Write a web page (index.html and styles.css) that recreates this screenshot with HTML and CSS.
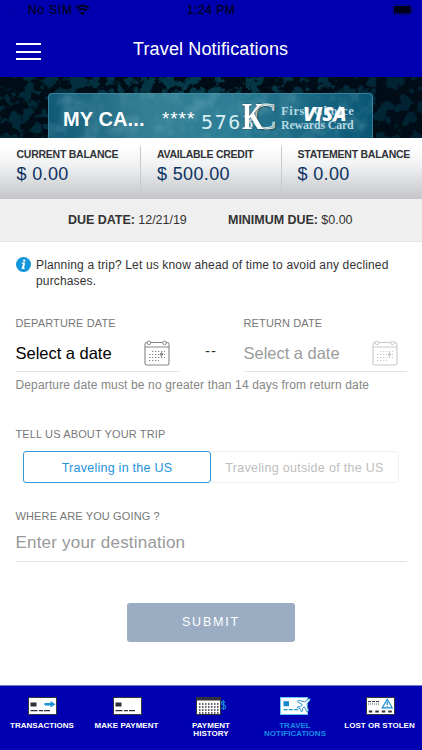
FILE: index.html
```html
<!DOCTYPE html>
<html lang="en">
<head>
<meta charset="utf-8">
<title>Travel Notifications</title>
<link rel="stylesheet" href="styles.css">
</head>
<body>
<div class="app">
  <header class="header">
    <div class="status">
      <div class="carrier"><span class="dots">....</span><span class="sim">No SIM</span>
        <svg width="15" height="12" viewBox="0 0 15 12"><path d="M1 4.2a9.5 9.5 0 0 1 13 0M3.2 6.8a6.2 6.2 0 0 1 8.6 0" fill="none" stroke="#020228" stroke-width="2.1"/><path d="M7.5 11.6 4.9 9a3.7 3.7 0 0 1 5.2 0z" fill="#020228"/></svg>
      </div>
      <span class="clock">1:24 PM</span>
      <svg class="battery" width="23" height="12" viewBox="0 0 23 12"><rect x=".5" y=".5" width="19" height="10.5" rx="2.5" fill="none" stroke="#06067c"/><rect x="2" y="2" width="16.5" height="7.5" rx="1" fill="#000018"/><path d="M21.2 4v4" stroke="#06067c" stroke-width="1.4"/></svg>
    </div>
    <div class="nav">
      <div class="menu"><i></i><i></i><i></i></div>
      <h1>Travel Notifications</h1>
    </div>
  </header>

  <section class="hero">
    <svg class="texture" width="422" height="61">
      <defs>
        <filter id="grunge" x="0" y="0" width="100%" height="100%" color-interpolation-filters="sRGB"><feTurbulence type="fractalNoise" baseFrequency=".085" numOctaves="4" seed="8"/><feColorMatrix values="0 0 0 0 0  0 0 0 0 .05  0 0 0 0 .09  12 0 0 0 -5.1"/></filter>
        <filter id="cloud" x="0" y="0" width="100%" height="100%"><feTurbulence type="fractalNoise" baseFrequency=".05" numOctaves="5" seed="3"/><feColorMatrix values="0 0 0 0 .25  0 0 0 0 .5  0 0 0 0 .58  2 0 0 0 -.85"/></filter>
        <linearGradient id="back"><stop offset="0" stop-color="#002736"/><stop offset=".5" stop-color="#063c4c"/><stop offset="1" stop-color="#002030"/></linearGradient>
        <linearGradient id="card"><stop offset="0" stop-color="#105a78"/><stop offset=".3" stop-color="#347f93"/><stop offset=".55" stop-color="#2d7e96"/><stop offset="1" stop-color="#085574"/></linearGradient>
        <clipPath id="cardshape"><path d="M48 61V20q0-4 4-4h317q4 0 4 4v41z"/></clipPath>
      </defs>
      <rect width="422" height="61" fill="url(#back)"/>
      <rect width="422" height="61" filter="url(#grunge)"/>
      <g clip-path="url(#cardshape)"><rect x="48" y="16" width="325" height="45" fill="url(#card)"/><rect x="48" y="16" width="325" height="45" filter="url(#cloud)" opacity=".35"/></g>
      <path d="M48.5 61V20q0-3.5 3.5-3.5h317q3.5 0 3.5 3.5v41" fill="none" stroke="#4c91a7" stroke-opacity=".7"/>
    </svg>
    <span class="cardname">MY CA...</span>
    <span class="stars">****</span>
    <span class="digits">5763</span>
    <span class="mono-c">C</span><span class="mono-k">K</span>
    <span class="brand">First Choice</span><span class="brand rewards">Rewards Card</span>
    <span class="visa">VISA</span>
  </section>

  <section class="stats">
    <div><b>CURRENT BALANCE</b><strong>$ 0.00</strong></div>
    <div><b>AVAILABLE CREDIT</b><strong>$ 500.00</strong></div>
    <div><b>STATEMENT BALANCE</b><strong>$ 0.00</strong></div>
  </section>
  <section class="due"><span><b>DUE DATE:</b> 12/21/19</span><span><b>MINIMUM DUE:</b> $0.00</span></section>

  <main class="form">
    <div class="tip">
      <svg width="15" height="15" viewBox="0 0 15 15"><circle cx="7.5" cy="7.5" r="7.5" fill="#1296dc"/><circle cx="8.2" cy="3.6" r="1.2" fill="#fff"/><path d="M5.8 6.2h2.3L7.1 11.2M5.7 11.3h3" fill="none" stroke="#fff" stroke-width="1.3"/><path d="m8 6-1 5.2" stroke="#fff" stroke-width="1.8"/></svg>
      <p>Planning a trip? Let us know ahead of time to avoid any declined<br>purchases.</p>
    </div>
    <div class="dates">
      <div class="field">
        <label>DEPARTURE DATE</label>
        <div class="input"><span>Select a date</span><svg width="26" height="26" viewBox="0 0 26 26"><g id="cal" fill="none" stroke="currentColor"><rect x="1" y="2.5" width="24" height="22.5" rx="1.8" stroke-width="1.1"/><path d="M1 7h24"/><circle cx="5" cy="2.8" r="1.8" fill="#fff"/><circle cx="20.5" cy="2.8" r="1.8" fill="#fff"/><path d="M8 11.5h13M5 14.5h16M5 17.5h16M5 20.5h10" stroke-dasharray="1.3 1.7"/><circle cx="17.5" cy="14.3" r="1.2" fill="currentColor"/><path d="M17.5 11.5v5.5" stroke-width=".8"/></g></svg></div>
      </div>
      <span class="dash">--</span>
      <div class="field off">
        <label>RETURN DATE</label>
        <div class="input"><span>Select a date</span><svg width="26" height="26" viewBox="0 0 26 26"><use href="#cal"/></svg></div>
      </div>
    </div>
    <p class="hint">Departure date must be no greater than 14 days from return date</p>
    <label class="trip">TELL US ABOUT YOUR TRIP</label>
    <div class="toggle"><span class="on">Traveling in the US</span><span class="no">Traveling outside of the US</span></div>
    <label class="where">WHERE ARE YOU GOING ?</label>
    <div class="destination">Enter your destination</div>
    <div class="submit">SUBMIT</div>
  </main>

  <nav class="tabs">
    <div class="tab"><svg width="34" height="19" viewBox="0 0 34 19"><rect x="3.5" y=".5" width="28" height="17" fill="#fff" stroke="#34343c"/><path d="M5.5 5.5h6v4h-6z" fill="#303039"/><path d="M19.5 6h6V4l5 3.2-5 3.2v-2h-6z" fill="#1c93d6"/><path d="M5.5 13.7H25" stroke="#303039" stroke-width="1.3" stroke-dasharray="7 1.5 4 1"/></svg>TRANSACTIONS</div>
    <div class="tab"><svg width="34" height="19" viewBox="0 0 34 19"><rect x="3.5" y=".5" width="28" height="17" fill="#fff" stroke="#34343c"/><path d="M5.5 5.5h6v4h-6z" fill="#303039"/><path d="M5.5 13.7H25" stroke="#303039" stroke-width="1.3" stroke-dasharray="7 1.5 4 1"/></svg>MAKE PAYMENT</div>
    <div class="tab"><svg width="34" height="19" viewBox="0 0 34 19"><rect x="2.5" y=".5" width="24" height="17" fill="#fff" stroke="#34343c"/><path d="M2 .5h25v3H2z" fill="#303039"/><path d="M5 7h20M5 10h20M5 13h20M5 16h20" stroke="#303039" stroke-width="1.3" stroke-dasharray="1.5 1.5"/><path d="M31.3 5.5q-4-2-4 .5 0 1.3 2 1.7 2.3.5 2.3 2.2 0 2.7-4.5 1.1M29.5 3v10" fill="none" stroke="#168bd3" stroke-width="1.2"/></svg>PAYMENT<br>HISTORY</div>
    <div class="tab active"><svg width="34" height="19" viewBox="0 0 34 19"><rect x="2.5" y=".5" width="27" height="17" fill="#fff" stroke="#68c4f2"/><path d="M5.5 4.2H11v5H5.5z" fill="#1687c8"/><path d="M5.5 12.7H21" stroke="#2394d0" stroke-width="1.3" stroke-dasharray="4 1.3"/><path d="m31 1.5-4.2 3.3-6.5-1.5-1 1.2 5 3.2-2 2.2-2.2-.4-.9.9 3 1.5 1.3 3 1-.8-.2-2.4 2-2 2.7 5.3 1.4-1L29 7l3-3.8q.8-1.7-1-1.7z" fill="#fff" stroke="#168bc9" stroke-width=".9"/></svg>TRAVEL<br>NOTIFICATIONS</div>
    <div class="tab"><svg width="34" height="19" viewBox="0 0 34 19"><rect x="3.5" y=".5" width="28" height="17" fill="#fff" stroke="#34343c"/><path d="M5 4.6h12" stroke="#303039" stroke-dasharray="3 1"/><path d="M5 7h12" stroke="#303039" stroke-width=".8" stroke-dasharray="1 1"/><path d="m24.2 2.3 5 8.5H19.3z" fill="#fff" stroke="#168bd3" stroke-width="1.2"/><path d="M24.2 4.7v3.2m0 1v1" stroke="#168bd3" stroke-width="1.2"/><path d="M5.8 14.5h23" stroke="#303039" stroke-width="1.8" stroke-dasharray="3.5 3"/></svg>LOST OR STOLEN</div>
  </nav>
</div>
</body>
</html>
```
FILE: styles.css
```css
* { box-sizing: border-box; }
body { margin: 0; font-family: "Liberation Sans", Arial, sans-serif; color: #333; background: #fff; }
h1, p { margin: 0; }
svg { display: block; flex: none; }
.app { width: 422px; height: 750px; display: flex; flex-direction: column; overflow: hidden; }
.header { height: 77px; background: #0000b1; }
.status { height: 21px; position: relative; color: #020228; }
.carrier { display: flex; padding: 4px 0 0 6px; }
.dots { width: 22px; font-size: 11px; color: #05057a; line-height: 13px; }
.sim { width: 47px; line-height: 13px; font-size: 12px; letter-spacing: .8px; white-space: nowrap; -webkit-text-stroke: .35px; }
.clock { position: absolute; left: 187px; top: 4px; line-height: 13px; letter-spacing: .5px; font-size: 12px; -webkit-text-stroke: .35px; }
.battery { position: absolute; left: 392px; top: 4px; }
.nav { display: flex; padding-left: 16px; align-items: flex-start; }
.menu { width: 25px; padding-top: 22px; display: flex; flex-direction: column; gap: 5.5px; }
.menu i { height: 2px; background: #fff; }
.nav h1 { margin: 17px 0 0 92px; font-size: 18px; font-weight: 400; line-height: 22px; letter-spacing: .14px; color: #fff; white-space: nowrap; }

.hero { position: relative; height: 61px; overflow: hidden; color: #fff; white-space: nowrap; }
.hero span { position: absolute; }
.cardname { left: 63px; top: 31px; font-size: 20px; line-height: 23px; font-weight: 700; letter-spacing: .1px; }
.stars { left: 162px; top: 32px; font-size: 19px; line-height: 20px; letter-spacing: .9px; }
.digits { left: 201px; top: 34px; font: 20px/22px "DejaVu Sans Mono", monospace; letter-spacing: 1.6px; color: #d8eef3; }
.mono-k { left: 242px; top: 23px; font: 700 38px/32px "Liberation Serif", serif; transform: scaleX(.74); transform-origin: left; text-shadow: 0 0 2px #102a38; }
.mono-c { left: 251px; top: 23px; font: 38px/32px "Liberation Serif", serif; color: #8aabb6; -webkit-text-stroke: .8px #d9e7e9; text-shadow: 1px 1px 1px #17313b; }
.brand { left: 281px; top: 27px; font: 700 12.5px/14px "Liberation Serif", serif; letter-spacing: .65px; color: #b4d8e3; }
.rewards { top: 41px; font-size: 12px; letter-spacing: -.2px; }
.visa { left: 303px; top: 26px; font: italic 800 20px/22px "Open Sans", sans-serif; letter-spacing: -.1px; }

.stats { height: 61px; display: grid; grid-template-columns: 140px 140.5px 1fr; background: linear-gradient(#fff 15%, #f0f1f2 45%, #c3c5c8); }
.stats div { margin-top: 8px; height: 46px; padding: 1px 0 0 16px; border-left: 1px solid #c9cacc; white-space: nowrap; }
.stats div:first-child { border-color: transparent; }
.stats b { display: block; font-size: 10.5px; line-height: 14px; letter-spacing: -.25px; color: #303338; }
.stats strong { display: block; font-weight: 400; font-size: 18px; line-height: 26px; letter-spacing: .35px; color: #0c3263; }
.stats div:first-child b, .stats div:first-child strong { margin-left: -.5px; }
.due { height: 43px; background: #efefef; display: flex; border-bottom: 1px solid #e5e5e5; font-size: 12.5px; line-height: 43px; padding-left: 68px; white-space: nowrap; letter-spacing: -.03px; }
.due span:first-child { width: 160px; }

.form { flex: 1; padding: 15px 15.5px 0 15.5px; }
.tip { display: flex; gap: 5.5px; height: 59px; }
.tip p { font-size: 12px; line-height: 16px; white-space: nowrap; letter-spacing: .15px; }
label { display: block; font-size: 11px; line-height: 14px; letter-spacing: .13px; color: #777; white-space: nowrap; }
.dates { display: flex; }
.field { width: 163px; height: 56px; border-bottom: 1px solid #e4e4e4; }
.input { display: flex; justify-content: space-between; padding: 9px 8.5px 0 0; color: #000; font-size: 16.5px; line-height: 28px; letter-spacing: -.02px; }
.input svg { margin-top: 1px; color: #858585; }
.off .input { color: #9b9b9b; }
.off .input svg { color: #c8c8c8; }
.dash { width: 65px; text-align: center; padding-top: 25px; font-size: 15px; line-height: 20px; letter-spacing: 1px; }
.hint { font-size: 12px; line-height: 16px; margin-top: 5px; color: #858585; white-space: nowrap; letter-spacing: .14px; }
.trip { margin-top: 34px; }
.toggle { display: flex; margin: 10px 0 0 7.5px; width: 376px; height: 32px; font-size: 12.5px; line-height: 32px; text-align: center; white-space: nowrap; }
.on { width: 188px; border: 1px solid #3698d6; border-radius: 3px; color: #2492da; letter-spacing: .25px; }
.no { width: 188px; border: 1px solid #f0f0f0; border-left: 0; border-radius: 0 3px 3px 0; color: #bdbdbd; letter-spacing: .3px; }
.where { margin-top: 26px; }
.destination { height: 39px; border-bottom: 1px solid #e4e4e4; color: #999; font-size: 17px; line-height: 39px; letter-spacing: .2px; }
.submit { margin: 41px 0 0 111.5px; width: 168px; height: 39px; border-radius: 3px; background: #9aadc3; color: #fff; text-align: center; font-size: 12.5px; line-height: 39px; letter-spacing: 1.8px; }
.tabs { height: 65px; background: #0000b1; border-top: 1px solid #7777cc; display: grid; grid-template-columns: 84px 85px 84px 84px 85px; color: #fff; font-size: 8px; font-weight: 700; line-height: 8px; letter-spacing: .03px; text-align: center; white-space: nowrap; }
.tab { padding-top: 11px; }
.tab svg { margin: 0 auto 6px; }
.active { color: #168de3; }
```
